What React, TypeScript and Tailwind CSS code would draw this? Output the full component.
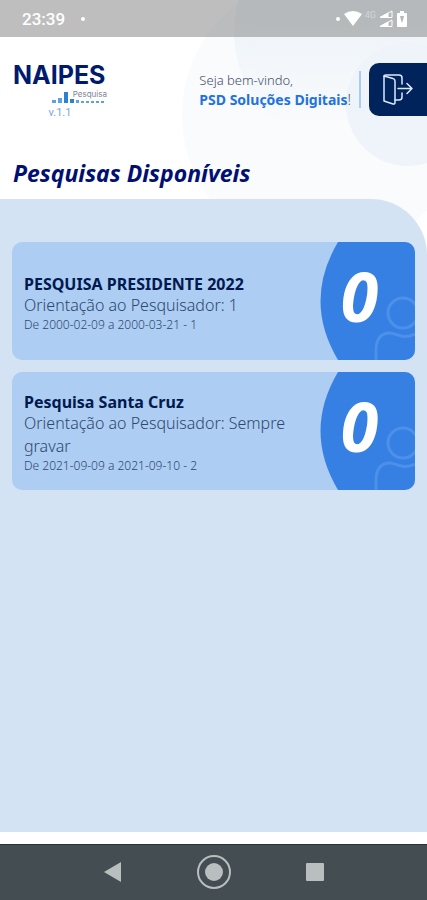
import { useId } from 'react';

type Survey = { id: number; title: string; note: string; period: string; count: number };

const surveys: Survey[] = [
  { id: 1, title: 'PESQUISA PRESIDENTE 2022', note: 'Orientação ao Pesquisador: 1', period: 'De 2000-02-09 a 2000-03-21 - 1', count: 0 },
  { id: 2, title: 'Pesquisa Santa Cruz', note: 'Orientação ao Pesquisador: Sempre gravar', period: 'De 2021-09-09 a 2021-09-10 - 2', count: 0 },
];

function StatusBar() {
  return (
    <div className="relative flex h-[37px] items-center justify-between bg-[#888888]/55 pr-5 pl-[22px] text-white">
      <div className="flex items-center gap-4">
        <span className="font-['Roboto'] text-[17px] leading-5 font-medium">23:39</span>
        <span className="size-1 rounded-full bg-white" />
      </div>
      <div className="flex items-center">
        <span className="mr-1 size-1 rounded-full bg-white" />
        <svg width="18" height="15" viewBox="0 0 18 15" fill="currentColor" aria-hidden="true">
          <path d="M0 3Q9-3 18 3L9 15Z" />
        </svg>
        <span className="mr-[3px] ml-[3px] self-start font-['Roboto'] text-[9px] leading-[10px] text-white/40">4G</span>
        <svg width="14" height="18" viewBox="0 0 14 18" fill="none" stroke="currentColor" aria-hidden="true">
          <path d="M1 7.5 13 1v6.500ZM1 16.500 13 10v6.500Z" />
          <path d="M1 7.500 9 3v4.500ZM1 16.500 9 12v4.500Z" fill="currentColor" />
        </svg>
        <svg className="ml-1" width="10" height="16" viewBox="0 0 10 16" aria-hidden="true">
          <path d="M3 0h4v2h2q1 0 1 1v12q0 1-1 1H1q-1 0-1-1V3q0-1 1-1h2Z" fill="currentColor" />
          <path d="M3 5h4l-1 4-1 3-1-3Z" fill="#b5b8ba" />
        </svg>
      </div>
    </div>
  );
}

function Logo() {
  return (
    <div className="flex w-[94px] flex-col">
      <span className="font-['Inter'] text-[25px] leading-6 font-bold text-[#001a6e]">NAIPES</span>
      <div className="flex h-4 flex-col items-end font-['Inter'] text-[#7b8592]">
        <span className="text-[8px] leading-[14px]">Pesquisa</span>
        <svg className="-mt-[9px] shrink-0" width="55" height="11" viewBox="0 0 55 11" aria-hidden="true">
          <path d="M0 8h4v3H0zM6 6h4v5H6zM24 8h3v3h-3zM29 9h3v2h-3zM34 9h3v2h-3zM39 9h3v2h-3zM44 9h3v2h-3zM49 9h3v2h-3z" fill="#5ba1e8" />
          <path d="M12 0h4v11h-4zM18 7h4v4h-4z" fill="#2d82cf" />
        </svg>
      </div>
      <span className="self-center font-['Roboto'] text-[11px] leading-5 text-[#82a5e2]">v.1.1</span>
    </div>
  );
}

function ExitIcon() {
  return (
    <svg width="30" height="31" viewBox="0 0 30 31" fill="none" stroke="#dce9ff" strokeWidth="1.500" strokeLinejoin="round" strokeLinecap="round" aria-hidden="true">
      <path d="M1 2v25l9 3q2 .5 2-1.500V7q0-2-2-2.500Z" />
      <path d="M1 2Q1 1 3 1h13q3 0 3 3v6M19 19v4q0 3-3 3h-4M15 14.500h14M24 9.500l5 5-5 5" />
    </svg>
  );
}

function Header() {
  return (
    <header className="relative flex h-[105px] items-start justify-between pt-[26px] pl-[13px]">
      <Logo />
      <div className="flex items-center">
        <p className="pt-[2px] text-[13px] leading-[19px] font-light text-[#44506a]">
          Seja bem-vindo,
          <br />
          <span className="text-[14px]"><strong className="font-bold text-[#1f72df]">PSD Soluções Digitais</strong>!</span>
        </p>
        <span className="mr-2 ml-2 h-[37px] w-[2px] bg-[#a9cbf7]" />
        <button type="button" aria-label="Sair" className="flex h-[53px] w-[58px] items-center rounded-l-[10px] bg-[#00235b] pl-[14px]">
          <ExitIcon />
        </button>
      </div>
    </header>
  );
}

function SurveyCard({ survey }: { survey: Survey }) {
  const titleId = useId();
  return (
    <li aria-labelledby={titleId} className="flex h-[118px] overflow-hidden rounded-[10px] bg-[#adcdf3]">
      <div className="flex min-w-0 flex-1 flex-col justify-center pt-1 pr-4 pl-3">
        <h2 id={titleId} className="text-[16px] leading-5 font-bold text-[#00194f]">{survey.title}</h2>
        <p className="text-[16px] leading-[23px] font-light text-[#2d486f]">{survey.note}</p>
        <p className="text-[12px] leading-4 font-light text-[#2d486f]">{survey.period}</p>
      </div>
      <div className="relative flex w-[95px] shrink-0 justify-center">
        <svg className="absolute inset-0" width="95" height="118" viewBox="0 0 95 118" aria-hidden="true">
          <path d="M18 0Q-17 59 18 118H95V0Z" fill="#3680e4" />
          <g fill="none" stroke="#4c90e9" strokeWidth="3">
            <circle cx="83" cy="71" r="15" />
            <path d="M56 118V109Q56 91 70 91C76 91 82 98 95 92" />
          </g>
        </svg>
        <span className="relative mr-4 pt-3 text-[68px] leading-[84px] font-bold text-white italic">{survey.count}</span>
      </div>
    </li>
  );
}

function NavigationBar() {
  return (
    <nav className="flex h-14 items-center justify-center border-t border-[#253437] bg-[#444d52] pb-[2px] text-[#b9bebf]">
      <button type="button" aria-label="Voltar" className="flex w-[101px] justify-center">
        <svg width="17" height="20" viewBox="0 0 17 20" fill="currentColor"><path d="M0 10 17 0v20Z" /></svg>
      </button>
      <button type="button" aria-label="Início" className="flex w-[101px] justify-center">
        <svg width="34" height="34" viewBox="0 0 34 34"><circle cx="17" cy="17" r="16" fill="none" stroke="currentColor" strokeWidth="2" /><circle cx="17" cy="17" r="9" fill="currentColor" /></svg>
      </button>
      <button type="button" aria-label="Recentes" className="flex w-[101px] justify-center">
        <span className="size-[18px] rounded-[1px] bg-current" />
      </button>
    </nav>
  );
}

export default function App() {
  return (
    <div className="relative flex min-h-screen flex-col overflow-hidden bg-white font-['Noto_Sans',sans-serif]">
      <svg className="absolute top-0 right-0" width="260" height="270" viewBox="0 0 260 270" aria-hidden="true">
        <defs>
          <linearGradient id="glow" x1="0" y1="0" x2="0" y2="1">
            <stop offset="0.45" stopColor="#eef4f9" />
            <stop offset="0.9" stopColor="#f9fbfd" />
          </linearGradient>
        </defs>
        <circle cx="156" cy="115" r="141" fill="#f9fbfd" />
        <circle cx="182" cy="32" r="115" fill="url(#glow)" />
        <circle cx="241" cy="104" r="62" fill="#eef4f9" />
      </svg>
      <StatusBar />
      <Header />
      <h1 className="relative h-[57px] pt-4 pl-[13px] text-[23px] leading-[30px] font-bold text-[#000f73] italic">Pesquisas Disponíveis</h1>
      <main className="relative mb-3 flex-1 rounded-tr-[56px] bg-[#d4e3f3] px-3 pt-[43px]">
        <ul className="flex flex-col gap-3">
          {surveys.map((survey) => <SurveyCard key={survey.id} survey={survey} />)}
        </ul>
      </main>
      <NavigationBar />
    </div>
  );
}
